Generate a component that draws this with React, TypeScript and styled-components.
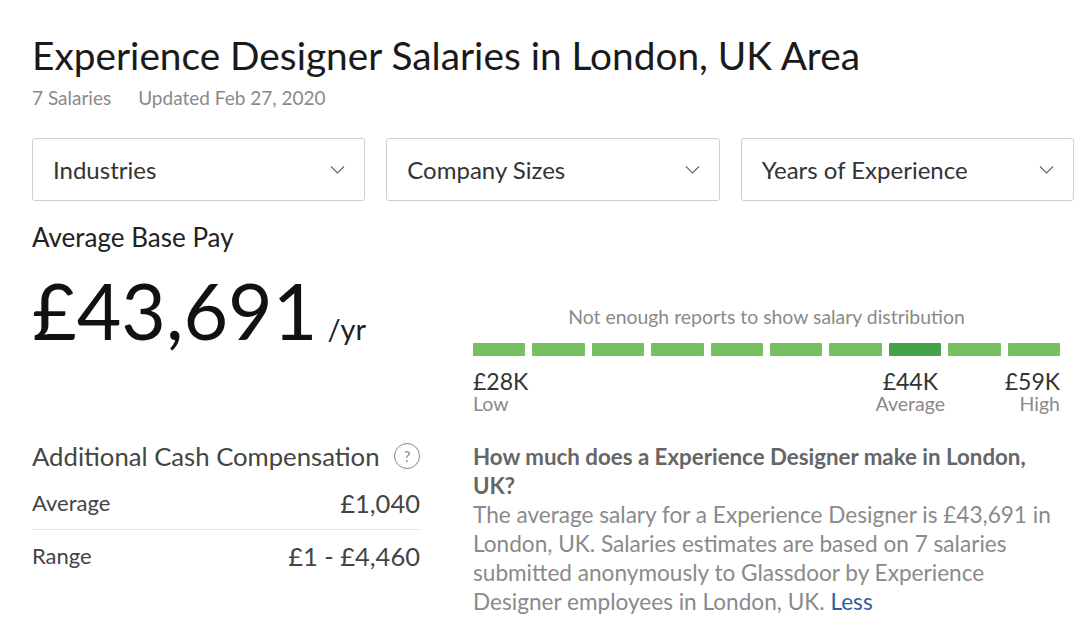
import React from 'react';
import styled, { createGlobalStyle } from 'styled-components';

const GlobalStyle = createGlobalStyle`
  html, body {
    margin: 0;
    padding: 0;
    background: #ffffff;
  }
  body {
    font-family: Lato, "Open Sans", "Liberation Sans", sans-serif;
    color: #1a1a1a;
  }
`;

const filters = ['Industries', 'Company Sizes', 'Years of Experience'];
const bars = [false, false, false, false, false, false, false, true, false, false];

const Page = styled.div`
  width: 1080px;
  padding: 32px 6px 0 32px;
  box-sizing: border-box;
`;

const Title = styled.h1`
  margin: 0;
  font-size: 38.8px;
  font-weight: 400;
  line-height: 46px;
  color: #1a1a1a;
`;

const Meta = styled.div`
  display: flex;
  gap: 27px;
  margin-top: 8px;
  font-size: 19px;
  line-height: 24px;
  color: #8a8a8a;
`;

const Filters = styled.div`
  display: grid;
  grid-template-columns: repeat(3, 1fr);
  gap: 21px;
  margin-top: 28px;
`;

const Select = styled.div`
  height: 63px;
  box-sizing: border-box;
  border: 1px solid #cfcfcf;
  border-radius: 3px;
  display: flex;
  align-items: center;
  justify-content: space-between;
  padding: 0 19px 0 20px;
  font-size: 24px;
  color: #333333;
`;

const Chevron = () => (
  <svg width="15" height="9" viewBox="0 0 15 9" fill="none">
    <path d="M1 1.5l6.5 6.5 6.5-6.5" stroke="#666" strokeWidth="1.1" />
  </svg>
);

const Main = styled.div`
  display: grid;
  grid-template-columns: 388px 1fr;
  column-gap: 53px;
  margin-top: 21px;
  padding-right: 14px;
`;

const Label = styled.div`
  font-size: 26px;
  line-height: 30px;
  color: #222;
`;

const Big = styled.div`
  display: flex;
  align-items: baseline;
  gap: 10px;
  margin-top: 19px;
`;

const Amount = styled.span`
  font-size: 77px;
  line-height: 78px;
  color: #111;
`;

const Unit = styled.span`
  font-size: 29px;
  color: #222;
`;

const Distribution = styled.div`
  margin-top: 83px;
`;

const Note = styled.div`
  text-align: center;
  font-size: 19.4px;
  line-height: 24px;
  color: #8a8a8a;
`;

const Bars = styled.div`
  display: grid;
  grid-template-columns: repeat(10, 1fr);
  gap: 7px;
  margin-top: 14px;
`;

const Bar = styled.div<{ $active: boolean }>`
  height: 13px;
  border-radius: 1px;
  background: ${(p) => (p.$active ? '#47a14b' : '#77c062')};
`;

const Scale = styled.div`
  display: grid;
  grid-template-columns: repeat(10, 1fr);
  gap: 7px;
  margin-top: 13px;
`;

const Point = styled.div<{ $col: string; $align: string }>`
  grid-column: ${(p) => p.$col};
  text-align: ${(p) => p.$align};
  white-space: nowrap;
`;

const PointValue = styled.div`
  font-size: 23px;
  line-height: 24px;
  color: #333;
`;

const PointLabel = styled.div`
  font-size: 19.5px;
  line-height: 22px;
  color: #8a8a8a;
`;

const Cash = styled.div`
  margin-top: 26px;
`;

const CashHead = styled.div`
  display: flex;
  align-items: center;
  justify-content: space-between;
  margin-bottom: 6px;
  font-size: 25.7px;
  line-height: 30px;
  color: #444;
`;

const Help = styled.span`
  width: 24px;
  height: 24px;
  border: 1px solid #8a8a8a;
  border-radius: 50%;
  display: inline-flex;
  align-items: center;
  justify-content: center;
  font-size: 15px;
  color: #8a8a8a;
`;

const Row = styled.div<{ $divider?: boolean }>`
  display: flex;
  justify-content: space-between;
  align-items: center;
  padding: 13px 0;
  border-bottom: ${(p) => (p.$divider ? '1px solid #e3e3e3' : 'none')};
`;

const RowLabel = styled.span`
  font-size: 22px;
  line-height: 26px;
  color: #444;
`;

const RowValue = styled.span`
  font-size: 25.5px;
  line-height: 26px;
  color: #444;
`;

const About = styled.div`
  margin-top: 27px;
  font-size: 22.6px;
  line-height: 29px;
`;

const Question = styled.div`
  font-weight: 700;
  font-size: 22.3px;
  color: #666;
`;

const Text = styled.div`
  color: #8a8a8a;
`;

const Link = styled.a`
  color: #2f5f9c;
  text-decoration: none;
`;

export default function App() {
  return (
    <>
      <GlobalStyle />
      <Page>
        <Title>Experience Designer Salaries in London, UK Area</Title>
        <Meta>
          <span>7 Salaries</span>
          <span>Updated Feb 27, 2020</span>
        </Meta>
        <Filters>
          {filters.map((f) => (
            <Select key={f}>
              {f}
              <Chevron />
            </Select>
          ))}
        </Filters>
        <Main>
          <div>
            <Label>Average Base Pay</Label>
            <Big>
              <Amount>£43,691</Amount>
              <Unit>/yr</Unit>
            </Big>
          </div>
          <Distribution>
            <Note>Not enough reports to show salary distribution</Note>
            <Bars>
              {bars.map((a, i) => (
                <Bar key={i} $active={a} />
              ))}
            </Bars>
            <Scale>
              <Point $col="1 / 3" $align="left">
                <PointValue>£28K</PointValue>
                <PointLabel>Low</PointLabel>
              </Point>
              <Point $col="8 / 9" $align="center">
                <PointValue>£44K</PointValue>
                <PointLabel>Average</PointLabel>
              </Point>
              <Point $col="9 / 11" $align="right">
                <PointValue>£59K</PointValue>
                <PointLabel>High</PointLabel>
              </Point>
            </Scale>
          </Distribution>
          <Cash>
            <CashHead>
              Additional Cash Compensation
              <Help>?</Help>
            </CashHead>
            <Row $divider>
              <RowLabel>Average</RowLabel>
              <RowValue>£1,040</RowValue>
            </Row>
            <Row>
              <RowLabel>Range</RowLabel>
              <RowValue>£1 - £4,460</RowValue>
            </Row>
          </Cash>
          <About>
            <Question>How much does a Experience Designer make in London, UK?</Question>
            <Text>
              The average salary for a Experience Designer is £43,691 in London, UK. Salaries estimates are based on 7 salaries submitted anonymously to Glassdoor by Experience Designer employees in London, UK. <Link href="#">Less</Link>
            </Text>
          </About>
        </Main>
      </Page>
    </>
  );
}
